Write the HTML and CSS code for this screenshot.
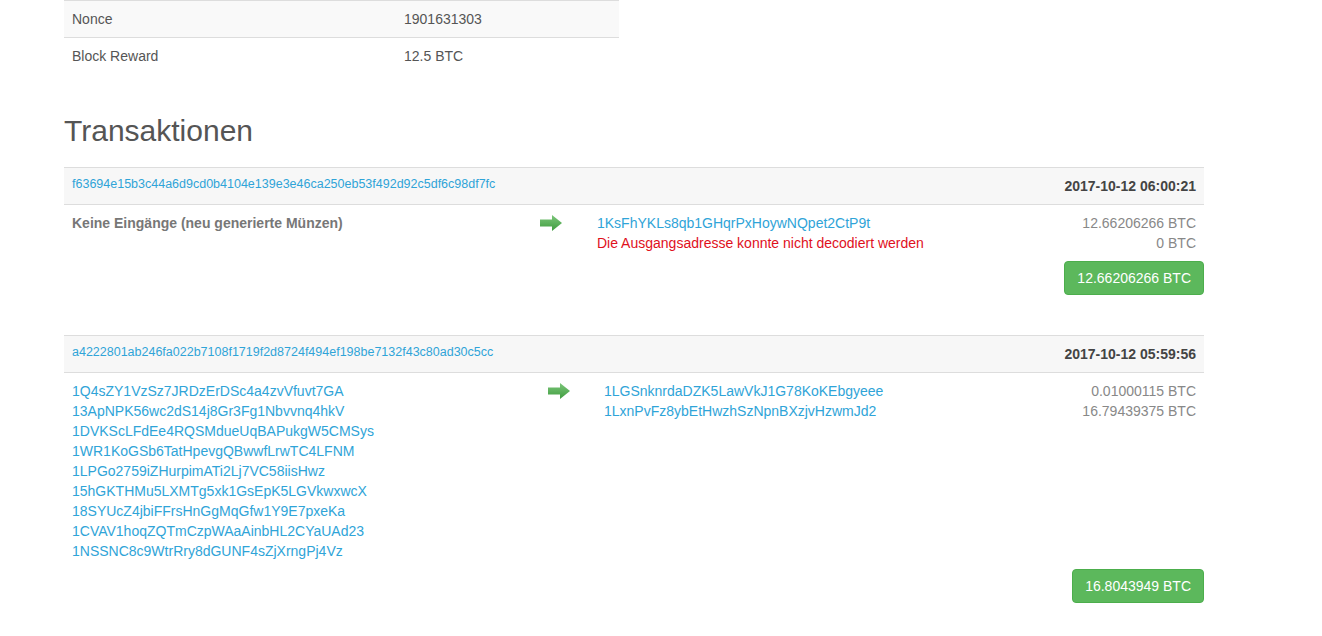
FILE: index.html
```html
<!DOCTYPE html>
<html lang="de">
<head>
  <meta charset="UTF-8">
  <title>Block - Transaktionen</title>
  <link rel="stylesheet" href="styles.css">
</head>
<body>

  <div class="container">

    <table class="summary">
      <tr class="striped">
        <td class="key">Nonce</td>
        <td>1901631303</td>
      </tr>
      <tr>
        <td class="key">Block Reward</td>
        <td>12.5 BTC</td>
      </tr>
    </table>

    <h2>Transaktionen</h2>

    <div class="tx">
      <div class="tx-head">
        <a class="hash" href="#">f63694e15b3c44a6d9cd0b4104e139e3e46ca250eb53f492d92c5df6c98df7fc</a>
        <span class="time">2017-10-12 06:00:21</span>
      </div>
      <div class="tx-body">
        <div class="cell inputs">
          <span class="coinbase">Keine Eingänge (neu generierte Münzen)</span>
        </div>
        <div class="cell arrow">
          <svg width="22" height="16" viewBox="0 0 22 16"><defs><linearGradient id="g1" x1="0" y1="0" x2="0" y2="1"><stop offset="0" stop-color="#7cc67a"/><stop offset="1" stop-color="#3f9c3f"/></linearGradient></defs><path d="M0 4.5H12V0L22 8L12 16V11.5H0Z" fill="url(#g1)"/></svg>
        </div>
        <div class="cell outputs">
          <a href="#">1KsFhYKLs8qb1GHqrPxHoywNQpet2CtP9t</a>
          <span class="error">Die Ausgangsadresse konnte nicht decodiert werden</span>
        </div>
        <div class="cell amounts">
          <span>12.66206266 BTC</span>
          <span>0 BTC</span>
        </div>
      </div>
      <div class="tx-foot">
        <button class="btn-total">12.66206266 BTC</button>
      </div>
    </div>

    <div class="tx">
      <div class="tx-head">
        <a class="hash" href="#">a4222801ab246fa022b7108f1719f2d8724f494ef198be7132f43c80ad30c5cc</a>
        <span class="time">2017-10-12 05:59:56</span>
      </div>
      <div class="tx-body wide">
        <div class="cell inputs">
          <a href="#">1Q4sZY1VzSz7JRDzErDSc4a4zvVfuvt7GA</a>
          <a href="#">13ApNPK56wc2dS14j8Gr3Fg1Nbvvnq4hkV</a>
          <a href="#">1DVKScLFdEe4RQSMdueUqBAPukgW5CMSys</a>
          <a href="#">1WR1KoGSb6TatHpevgQBwwfLrwTC4LFNM</a>
          <a href="#">1LPGo2759iZHurpimATi2Lj7VC58iisHwz</a>
          <a href="#">15hGKTHMu5LXMTg5xk1GsEpK5LGVkwxwcX</a>
          <a href="#">18SYUcZ4jbiFFrsHnGgMqGfw1Y9E7pxeKa</a>
          <a href="#">1CVAV1hoqZQTmCzpWAaAinbHL2CYaUAd23</a>
          <a href="#">1NSSNC8c9WtrRry8dGUNF4sZjXrngPj4Vz</a>
        </div>
        <div class="cell arrow">
          <svg width="22" height="16" viewBox="0 0 22 16"><defs><linearGradient id="g2" x1="0" y1="0" x2="0" y2="1"><stop offset="0" stop-color="#7cc67a"/><stop offset="1" stop-color="#3f9c3f"/></linearGradient></defs><path d="M0 4.5H12V0L22 8L12 16V11.5H0Z" fill="url(#g2)"/></svg>
        </div>
        <div class="cell outputs">
          <a href="#">1LGSnknrdaDZK5LawVkJ1G78KoKEbgyeee</a>
          <a href="#">1LxnPvFz8ybEtHwzhSzNpnBXzjvHzwmJd2</a>
        </div>
        <div class="cell amounts">
          <span>0.01000115 BTC</span>
          <span>16.79439375 BTC</span>
        </div>
      </div>
      <div class="tx-foot">
        <button class="btn-total">16.8043949 BTC</button>
      </div>
    </div>

  </div>

</body>
</html>
```

FILE: styles.css
```css
body {
  margin: 0;
  font-family: "Liberation Sans", Arial, sans-serif;
  font-size: 14px;
  line-height: 20px;
  color: #555;
  background: #fff;
}

a {
  color: #2fa4d8;
  text-decoration: none;
}

.container {
  width: 1140px;
  margin-left: 64px;
}

.summary {
  width: 555px;
  border-collapse: collapse;
  margin-bottom: 20px;
}

.summary td {
  padding: 8px;
  border-top: 1px solid #ddd;
  vertical-align: top;
}

.summary .key {
  width: 316px;
}

.summary .striped td {
  background: #f9f9f9;
}

h2 {
  font-size: 30px;
  font-weight: 500;
  line-height: 33px;
  color: #555;
  margin: 40px 0 20px;
}

.tx {
  margin-bottom: 40px;
}

.tx-head {
  display: flex;
  justify-content: space-between;
  align-items: flex-start;
  height: 20px;
  padding: 8px;
  background: #f7f7f7;
  border-top: 1px solid #ddd;
  border-bottom: 1px solid #ddd;
}

.tx-head .hash {
  font-size: 12.5px;
  line-height: 16px;
}

.tx-head .time {
  font-weight: bold;
  color: #444;
}

.tx-body {
  display: grid;
  grid-template-columns: 468px 57px 1fr auto;
}

.tx-body.wide {
  grid-template-columns: 476px 56px 1fr auto;
}

.cell {
  padding: 8px;
  display: flex;
  flex-direction: column;
}

.coinbase {
  font-weight: bold;
  color: #777;
}

.arrow svg {
  margin-top: 2px;
}

.error {
  color: #e0101c;
}

.amounts {
  text-align: right;
  color: #888;
}

.tx-foot {
  display: flex;
  justify-content: flex-end;
}

.btn-total {
  font-family: inherit;
  font-size: 14px;
  line-height: 20px;
  padding: 6px 12px;
  color: #fff;
  background: #5cb85c;
  border: 1px solid #4cae4c;
  border-radius: 4px;
}
```
